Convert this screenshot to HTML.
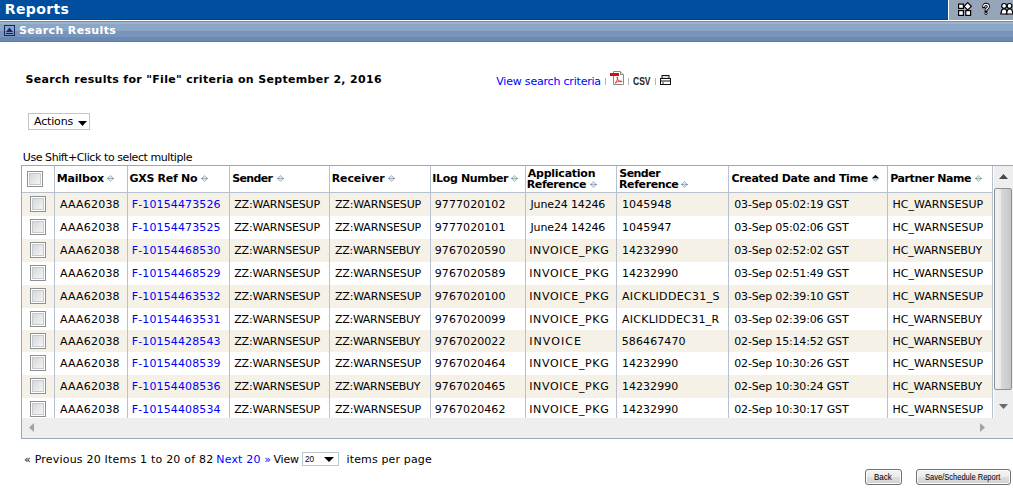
<!DOCTYPE html><html><head><meta charset="utf-8"><title>Reports</title><style>
html,body{margin:0;padding:0;background:#fff;}
body{width:1013px;height:499px;position:relative;overflow:hidden;font-family:"DejaVu Sans","Liberation Sans",sans-serif;font-size:11px;color:#000;}
.a{position:absolute;white-space:nowrap;}
.vb{width:1px;background:#b7c1d0;top:166px;height:252px}
.cb{width:16px;height:16px;border:1px solid #8e8f8f;background:#fff;box-sizing:border-box;}
.cb i{position:absolute;left:1px;top:1px;width:12px;height:12px;background:linear-gradient(135deg,#d6d8da,#f4f4f4);border:1px solid #c6cace;box-sizing:border-box;}
</style></head><body>
<div class="a" style="left:0;top:0;width:1013px;height:19px;background:#004f9f;border-bottom:1px solid #003f90"></div>
<div class="a" style="left:948px;top:0;width:65px;height:20px;background:#97a5b9;border-left:1px solid #fff"></div>
<div class="a" style="left:0;top:21px;width:1013px;height:21px;background:linear-gradient(#818b9b 0px,#818b9b 1px,#9db3d0 1px,#9db3d0 3px,#8ba6c6 3px,#8ba6c6 10px,#7795bb 10px,#7795bb 16px,#6a8ab3 16px,#6a8ab3 20px,#5f7a9c 20px,#5f7a9c 21px)"></div>
<svg class="a" style="left:4px;top:25px" width="11" height="11" viewBox="0 0 11 11"><rect x="0.5" y="0.5" width="10" height="10" fill="none" stroke="#14286a"/><path d="M2 7 L5.5 2.5 L9 7 Z" fill="#14286a"/><rect x="2" y="8" width="7" height="1" fill="#14286a"/></svg>
<svg class="a" style="left:957px;top:2px" width="56" height="16" viewBox="0 0 56 16"><g fill="#fff" stroke="#000" stroke-width="1.2"><rect x="1.6" y="2.1" width="4.8" height="4.3"/><rect x="1.6" y="8.6" width="4.8" height="4.8"/><rect x="8.8" y="8.6" width="4.8" height="4.8"/><path d="M10.7 0.7 L14.3 4.3 L10.7 7.9 L7.1 4.3 Z"/></g><path d="M26.7 4.9 q0-2.6 2.3-2.6 q2.4 0 2.4 2.2 q0 1.4-1.4 2.3 q-1 0.7-1 1.8" fill="none" stroke="#000" stroke-width="2.9" stroke-linecap="square"/><path d="M26.7 4.9 q0-2.6 2.3-2.6 q2.4 0 2.4 2.2 q0 1.4-1.4 2.3 q-1 0.7-1 1.8" fill="none" stroke="#fff" stroke-width="1.3"/><circle cx="29" cy="11.5" r="1.45" fill="#000"/><circle cx="29" cy="11.5" r="0.65" fill="#fff"/><g fill="#fff" stroke="#000" stroke-width="1.2"><path d="M43.8 12 L44.8 8 q2.3-2 4.6 0 L50.4 12 Z"/><circle cx="47.1" cy="3.9" r="2.4"/><path d="M49.4 12 L50.4 8 q2.3-2 4.6 0 L56 12 Z"/><circle cx="52.5" cy="3.9" r="2.4"/></g></svg>
<div class="a" style="left:605px;top:78px;width:1px;height:7px;background:#b4b4b4"></div>
<div class="a" style="left:628px;top:78px;width:1px;height:7px;background:#b4b4b4"></div>
<div class="a" style="left:655px;top:78px;width:1px;height:7px;background:#b4b4b4"></div>
<svg class="a" style="left:610px;top:71px" width="14" height="14" viewBox="0 0 14 14"><path d="M3.5 0.5 H10.5 L13.5 3.5 V13.5 H3.5 Z" fill="#fff" stroke="#8a8a8a" stroke-width="1"/><path d="M10.5 0.5 V3.5 H13.5" fill="#e4e4e4" stroke="#8a8a8a" stroke-width="1"/><rect x="0" y="2" width="9" height="3" fill="#d4100c"/><path d="M5.2 12.2 C7 10 8 7.6 7.6 6.2 C7.2 5.4 6.8 6.6 7.6 8.2 C8.6 10 10.4 11 11.8 10.8 C12.6 10.4 11 9.8 8.8 10.2 C7.2 10.6 5.8 11.6 5.2 12.2 Z" fill="none" stroke="#e0201c" stroke-width="0.9"/></svg>
<svg class="a" style="left:660px;top:75px" width="11" height="10" viewBox="0 0 11 10"><rect x="2" y="0.5" width="7" height="3" fill="#ddd" stroke="#111"/><rect x="0.5" y="3.5" width="10" height="6" fill="#fff" stroke="#111"/><rect x="0.5" y="5.5" width="10" height="1" fill="#111"/><rect x="2" y="7.5" width="2" height="1" fill="#333"/></svg>
<div class="a" style="left:28px;top:113px;width:62px;height:17px;border:1px solid #c4c4c4;box-sizing:border-box;background:#fff"></div>
<svg class="a" style="left:78px;top:121px" width="9" height="5" viewBox="0 0 9 5"><path d="M0 0 H9 L4.5 5 Z" fill="#000"/></svg>
<div class="a" style="left:21px;top:165px;width:992px;height:274px;border:1px solid #9aa8bb;border-right:none;box-sizing:border-box;background:#fff"></div>
<div class="a" style="left:22px;top:193px;width:970px;height:23px;background:#f5f1e6"></div>
<div class="a" style="left:22px;top:239px;width:970px;height:23px;background:#f5f1e6"></div>
<div class="a" style="left:22px;top:285px;width:970px;height:23px;background:#f5f1e6"></div>
<div class="a" style="left:22px;top:330px;width:970px;height:22px;background:#f5f1e6"></div>
<div class="a" style="left:22px;top:375px;width:970px;height:23px;background:#f5f1e6"></div>
<div class="a" style="left:22px;top:192px;width:971px;height:1px;background:#b7c1d0"></div>
<div class="a vb" style="left:54px"></div>
<div class="a vb" style="left:127px"></div>
<div class="a vb" style="left:229px"></div>
<div class="a vb" style="left:329px"></div>
<div class="a vb" style="left:430px"></div>
<div class="a vb" style="left:525px"></div>
<div class="a vb" style="left:616px"></div>
<div class="a vb" style="left:728px"></div>
<div class="a vb" style="left:887px"></div>
<div class="a vb" style="left:992px"></div>
<div class="a cb" style="left:27px;top:171px"><i></i></div>
<div class="a cb" style="left:30px;top:196px"><i></i></div>
<div class="a cb" style="left:30px;top:219px"><i></i></div>
<div class="a cb" style="left:30px;top:242px"><i></i></div>
<div class="a cb" style="left:30px;top:265px"><i></i></div>
<div class="a cb" style="left:30px;top:288px"><i></i></div>
<div class="a cb" style="left:30px;top:311px"><i></i></div>
<div class="a cb" style="left:30px;top:333px"><i></i></div>
<div class="a cb" style="left:30px;top:355px"><i></i></div>
<div class="a cb" style="left:30px;top:378px"><i></i></div>
<div class="a cb" style="left:30px;top:401px"><i></i></div>
<svg class="a" style="left:106.5px;top:175px" width="7" height="7" viewBox="0 0 7 7"><path d="M3.5 0.4 L6.6 3.5 L3.5 6.6 L0.4 3.5 Z" fill="#d0e6e2" stroke="#a2adbd" stroke-width="0.8"/><rect x="0" y="3" width="2.6" height="1" fill="#8a96a8"/><rect x="4.4" y="3" width="2.6" height="1" fill="#8a96a8"/><rect x="2.6" y="3" width="1.8" height="1" fill="#b4bcc6"/></svg>
<svg class="a" style="left:200.5px;top:175px" width="7" height="7" viewBox="0 0 7 7"><path d="M3.5 0.4 L6.6 3.5 L3.5 6.6 L0.4 3.5 Z" fill="#d0e6e2" stroke="#a2adbd" stroke-width="0.8"/><rect x="0" y="3" width="2.6" height="1" fill="#8a96a8"/><rect x="4.4" y="3" width="2.6" height="1" fill="#8a96a8"/><rect x="2.6" y="3" width="1.8" height="1" fill="#b4bcc6"/></svg>
<svg class="a" style="left:276.5px;top:175px" width="7" height="7" viewBox="0 0 7 7"><path d="M3.5 0.4 L6.6 3.5 L3.5 6.6 L0.4 3.5 Z" fill="#d0e6e2" stroke="#a2adbd" stroke-width="0.8"/><rect x="0" y="3" width="2.6" height="1" fill="#8a96a8"/><rect x="4.4" y="3" width="2.6" height="1" fill="#8a96a8"/><rect x="2.6" y="3" width="1.8" height="1" fill="#b4bcc6"/></svg>
<svg class="a" style="left:387.5px;top:175px" width="7" height="7" viewBox="0 0 7 7"><path d="M3.5 0.4 L6.6 3.5 L3.5 6.6 L0.4 3.5 Z" fill="#d0e6e2" stroke="#a2adbd" stroke-width="0.8"/><rect x="0" y="3" width="2.6" height="1" fill="#8a96a8"/><rect x="4.4" y="3" width="2.6" height="1" fill="#8a96a8"/><rect x="2.6" y="3" width="1.8" height="1" fill="#b4bcc6"/></svg>
<svg class="a" style="left:511.3px;top:175px" width="7" height="7" viewBox="0 0 7 7"><path d="M3.5 0.4 L6.6 3.5 L3.5 6.6 L0.4 3.5 Z" fill="#d0e6e2" stroke="#a2adbd" stroke-width="0.8"/><rect x="0" y="3" width="2.6" height="1" fill="#8a96a8"/><rect x="4.4" y="3" width="2.6" height="1" fill="#8a96a8"/><rect x="2.6" y="3" width="1.8" height="1" fill="#b4bcc6"/></svg>
<svg class="a" style="left:589.5px;top:181px" width="7" height="7" viewBox="0 0 7 7"><path d="M3.5 0.4 L6.6 3.5 L3.5 6.6 L0.4 3.5 Z" fill="#d0e6e2" stroke="#a2adbd" stroke-width="0.8"/><rect x="0" y="3" width="2.6" height="1" fill="#8a96a8"/><rect x="4.4" y="3" width="2.6" height="1" fill="#8a96a8"/><rect x="2.6" y="3" width="1.8" height="1" fill="#b4bcc6"/></svg>
<svg class="a" style="left:681.4px;top:181px" width="7" height="7" viewBox="0 0 7 7"><path d="M3.5 0.4 L6.6 3.5 L3.5 6.6 L0.4 3.5 Z" fill="#d0e6e2" stroke="#a2adbd" stroke-width="0.8"/><rect x="0" y="3" width="2.6" height="1" fill="#8a96a8"/><rect x="4.4" y="3" width="2.6" height="1" fill="#8a96a8"/><rect x="2.6" y="3" width="1.8" height="1" fill="#b4bcc6"/></svg>
<svg class="a" style="left:871.5px;top:175px" width="7" height="7" viewBox="0 0 7 7"><path d="M3.5 -0.2 L6.9 3 H0.1 Z" fill="#0a0a0a"/><rect x="0" y="3" width="2.6" height="1" fill="#8a96a8"/><rect x="4.4" y="3" width="2.6" height="1" fill="#8a96a8"/><rect x="2.6" y="3" width="1.8" height="1" fill="#b4bcc6"/><path d="M0.6 4 H6.4 L3.5 6.8 Z" fill="#c6dcda" stroke="#aab6c2" stroke-width="0.5"/></svg>
<svg class="a" style="left:974.7px;top:175px" width="7" height="7" viewBox="0 0 7 7"><path d="M3.5 0.4 L6.6 3.5 L3.5 6.6 L0.4 3.5 Z" fill="#d0e6e2" stroke="#a2adbd" stroke-width="0.8"/><rect x="0" y="3" width="2.6" height="1" fill="#8a96a8"/><rect x="4.4" y="3" width="2.6" height="1" fill="#8a96a8"/><rect x="2.6" y="3" width="1.8" height="1" fill="#b4bcc6"/></svg>
<div class="a" style="left:22px;top:418px;width:991px;height:20px;background:#eeeeee"></div>
<svg class="a" style="left:29px;top:423px" width="5" height="9" viewBox="0 0 5 9"><path d="M5 0 V9 L0 4.5 Z" fill="#a3a3a3"/></svg>
<svg class="a" style="left:980px;top:423px" width="5" height="9" viewBox="0 0 5 9"><path d="M0 0 V9 L5 4.5 Z" fill="#a3a3a3"/></svg>
<div class="a" style="left:993px;top:166px;width:20px;height:252px;background:#eeeeee;border-left:1px solid #fff;box-sizing:border-box"></div>
<svg class="a" style="left:999px;top:174px" width="9" height="5" viewBox="0 0 9 5"><path d="M0 5 H9 L4.5 0 Z" fill="#484848"/></svg>
<svg class="a" style="left:999px;top:404px" width="9" height="5" viewBox="0 0 9 5"><path d="M0 0 H9 L4.5 5 Z" fill="#6a6a6a"/></svg>
<div class="a" style="left:994px;top:188px;width:18px;height:202px;background:linear-gradient(90deg,#f0f0f0 0%,#ececec 34%,#d8d8d8 38%,#d0d0d0 70%,#c6c6c6 100%);border:1px solid #8e8e8e;border-radius:2px;box-sizing:border-box"></div>
<div class="a" style="left:302px;top:452px;width:37px;height:14px;border:1px solid #b9c9c3;box-sizing:border-box;background:#fff"></div>
<svg class="a" style="left:324px;top:457px" width="10" height="5" viewBox="0 0 10 5"><path d="M0 0 H10 L5 5 Z" fill="#000"/></svg>
<div class="a" style="left:865px;top:469px;width:37px;height:16px;border:1px solid #707070;border-radius:3px;background:linear-gradient(#f4f4f4 0%,#ebebeb 48%,#dcdcdc 52%,#d2d2d2 100%);box-sizing:border-box;box-shadow:inset 0 0 0 1px #fafafa;"></div>
<div class="a" style="left:916px;top:469px;width:95px;height:16px;border:1px solid #707070;border-radius:3px;background:linear-gradient(#f4f4f4 0%,#ebebeb 48%,#dcdcdc 52%,#d2d2d2 100%);box-sizing:border-box;box-shadow:inset 0 0 0 1px #fafafa;"></div>
<div class="a" id="title" style="left:4.75px;top:0px;font-size:14px;font-weight:bold;color:#fff;line-height:18px;letter-spacing:0.383px">Reports</div>
<div class="a" id="subt" style="left:19.00px;top:24px;font-weight:bold;color:#fff;line-height:14px;letter-spacing:0.346px">Search Results</div>
<div class="a" id="res" style="left:25.50px;top:73px;font-weight:bold;line-height:14px;letter-spacing:0.318px">Search results for "File" criteria on September 2, 2016</div>
<div class="a" id="vsc" style="left:496.25px;top:75px;color:#0000ff;line-height:14px;letter-spacing:-0.200px">View search criteria</div>
<div class="a" id="csv" style="left:632.75px;top:75px;font-family:'Liberation Sans',sans-serif;font-size:10px;font-weight:bold;line-height:14px;color:#222;transform:scaleX(0.8500);transform-origin:0 0">CSV</div>
<div class="a" id="act" style="left:34.00px;top:115px;line-height:14px;letter-spacing:-0.158px">Actions</div>
<div class="a" id="use" style="left:22.75px;top:151px;line-height:14px;letter-spacing:-0.421px">Use Shift+Click to select multiple</div>
<div class="a" id="h0" style="left:56.75px;top:172px;font-weight:bold;line-height:14px;letter-spacing:-0.175px">Mailbox</div>
<div class="a" id="h1" style="left:129.50px;top:172px;font-weight:bold;line-height:14px;letter-spacing:-0.289px">GXS Ref No</div>
<div class="a" id="h2" style="left:232.25px;top:172px;font-weight:bold;line-height:14px;letter-spacing:-0.650px">Sender</div>
<div class="a" id="h3" style="left:331.75px;top:172px;font-weight:bold;line-height:14px;letter-spacing:-0.121px">Receiver</div>
<div class="a" id="h4" style="left:432.25px;top:172px;font-weight:bold;line-height:14px;letter-spacing:-0.335px">ILog Number</div>
<div class="a" id="h5" style="left:527.75px;top:167px;font-weight:bold;line-height:14px;letter-spacing:-0.240px">Application</div>
<div class="a" id="h6" style="left:526.75px;top:178px;font-weight:bold;line-height:14px;letter-spacing:-0.400px">Reference</div>
<div class="a" id="h7" style="left:619.25px;top:167px;font-weight:bold;line-height:14px;letter-spacing:-0.530px">Sender</div>
<div class="a" id="h8" style="left:619.00px;top:178px;font-weight:bold;line-height:14px;letter-spacing:-0.387px">Reference</div>
<div class="a" id="h9" style="left:731.50px;top:172px;font-weight:bold;line-height:14px;letter-spacing:-0.320px">Created Date and Time</div>
<div class="a" id="h10" style="left:890.25px;top:172px;font-weight:bold;line-height:14px;letter-spacing:-0.423px">Partner Name</div>
<div class="a" id="d0_0" style="left:60.00px;top:198px;line-height:14px;letter-spacing:0.200px">AAA62038</div>
<div class="a" id="d0_1" style="left:131.75px;top:198px;line-height:14px;color:#0000ff;letter-spacing:0.125px">F-10154473526</div>
<div class="a" id="d0_2" style="left:234.25px;top:198px;line-height:14px;letter-spacing:-0.205px">ZZ:WARNSESUP</div>
<div class="a" id="d0_3" style="left:335.00px;top:198px;line-height:14px;letter-spacing:-0.173px">ZZ:WARNSESUP</div>
<div class="a" id="d0_4" style="left:434.75px;top:198px;line-height:14px;letter-spacing:0.078px">9777020102</div>
<div class="a" id="d0_5" style="left:530.50px;top:198px;line-height:14px;letter-spacing:-0.145px">June24 14246</div>
<div class="a" id="d0_6" style="left:622.00px;top:198px;line-height:14px;letter-spacing:0.083px">1045948</div>
<div class="a" id="d0_7" style="left:734.25px;top:198px;line-height:14px;letter-spacing:-0.164px">03-Sep 05:02:19 GST</div>
<div class="a" id="d0_8" style="left:892.50px;top:198px;line-height:14px;letter-spacing:-0.009px">HC_WARNSESUP</div>
<div class="a" id="d1_0" style="left:60.00px;top:221px;line-height:14px;letter-spacing:0.200px">AAA62038</div>
<div class="a" id="d1_1" style="left:131.75px;top:221px;line-height:14px;color:#0000ff;letter-spacing:0.125px">F-10154473525</div>
<div class="a" id="d1_2" style="left:234.25px;top:221px;line-height:14px;letter-spacing:-0.205px">ZZ:WARNSESUP</div>
<div class="a" id="d1_3" style="left:335.00px;top:221px;line-height:14px;letter-spacing:-0.173px">ZZ:WARNSESUP</div>
<div class="a" id="d1_4" style="left:434.75px;top:221px;line-height:14px;letter-spacing:0.078px">9777020101</div>
<div class="a" id="d1_5" style="left:530.50px;top:221px;line-height:14px;letter-spacing:-0.145px">June24 14246</div>
<div class="a" id="d1_6" style="left:622.00px;top:221px;line-height:14px;letter-spacing:0.083px">1045947</div>
<div class="a" id="d1_7" style="left:734.25px;top:221px;line-height:14px;letter-spacing:-0.164px">03-Sep 05:02:06 GST</div>
<div class="a" id="d1_8" style="left:892.50px;top:221px;line-height:14px;letter-spacing:-0.009px">HC_WARNSESUP</div>
<div class="a" id="d2_0" style="left:60.00px;top:244px;line-height:14px;letter-spacing:0.200px">AAA62038</div>
<div class="a" id="d2_1" style="left:131.75px;top:244px;line-height:14px;color:#0000ff;letter-spacing:0.125px">F-10154468530</div>
<div class="a" id="d2_2" style="left:234.25px;top:244px;line-height:14px;letter-spacing:-0.205px">ZZ:WARNSESUP</div>
<div class="a" id="d2_3" style="left:335.00px;top:244px;line-height:14px;letter-spacing:-0.295px">ZZ:WARNSEBUY</div>
<div class="a" id="d2_4" style="left:434.75px;top:244px;line-height:14px;letter-spacing:0.078px">9767020590</div>
<div class="a" id="d2_5" style="left:529.25px;top:244px;line-height:14px;letter-spacing:0.620px">INVOICE_PKG</div>
<div class="a" id="d2_6" style="left:622.00px;top:244px;line-height:14px;letter-spacing:0.029px">14232990</div>
<div class="a" id="d2_7" style="left:734.25px;top:244px;line-height:14px;letter-spacing:-0.164px">03-Sep 02:52:02 GST</div>
<div class="a" id="d2_8" style="left:892.50px;top:244px;line-height:14px;letter-spacing:-0.141px">HC_WARNSEBUY</div>
<div class="a" id="d3_0" style="left:60.00px;top:267px;line-height:14px;letter-spacing:0.200px">AAA62038</div>
<div class="a" id="d3_1" style="left:131.75px;top:267px;line-height:14px;color:#0000ff;letter-spacing:0.125px">F-10154468529</div>
<div class="a" id="d3_2" style="left:234.25px;top:267px;line-height:14px;letter-spacing:-0.205px">ZZ:WARNSESUP</div>
<div class="a" id="d3_3" style="left:335.00px;top:267px;line-height:14px;letter-spacing:-0.173px">ZZ:WARNSESUP</div>
<div class="a" id="d3_4" style="left:434.75px;top:267px;line-height:14px;letter-spacing:0.078px">9767020589</div>
<div class="a" id="d3_5" style="left:529.25px;top:267px;line-height:14px;letter-spacing:0.620px">INVOICE_PKG</div>
<div class="a" id="d3_6" style="left:622.00px;top:267px;line-height:14px;letter-spacing:0.029px">14232990</div>
<div class="a" id="d3_7" style="left:734.25px;top:267px;line-height:14px;letter-spacing:-0.164px">03-Sep 02:51:49 GST</div>
<div class="a" id="d3_8" style="left:892.50px;top:267px;line-height:14px;letter-spacing:-0.009px">HC_WARNSESUP</div>
<div class="a" id="d4_0" style="left:60.00px;top:290px;line-height:14px;letter-spacing:0.200px">AAA62038</div>
<div class="a" id="d4_1" style="left:131.75px;top:290px;line-height:14px;color:#0000ff;letter-spacing:0.125px">F-10154463532</div>
<div class="a" id="d4_2" style="left:234.25px;top:290px;line-height:14px;letter-spacing:-0.205px">ZZ:WARNSESUP</div>
<div class="a" id="d4_3" style="left:335.00px;top:290px;line-height:14px;letter-spacing:-0.173px">ZZ:WARNSESUP</div>
<div class="a" id="d4_4" style="left:434.75px;top:290px;line-height:14px;letter-spacing:0.078px">9767020100</div>
<div class="a" id="d4_5" style="left:529.25px;top:290px;line-height:14px;letter-spacing:0.620px">INVOICE_PKG</div>
<div class="a" id="d4_6" style="left:622.00px;top:290px;line-height:14px;letter-spacing:0.342px">AICKLIDDEC31_S</div>
<div class="a" id="d4_7" style="left:734.25px;top:290px;line-height:14px;letter-spacing:-0.164px">03-Sep 02:39:10 GST</div>
<div class="a" id="d4_8" style="left:892.50px;top:290px;line-height:14px;letter-spacing:-0.009px">HC_WARNSESUP</div>
<div class="a" id="d5_0" style="left:60.00px;top:313px;line-height:14px;letter-spacing:0.200px">AAA62038</div>
<div class="a" id="d5_1" style="left:131.75px;top:313px;line-height:14px;color:#0000ff;letter-spacing:0.125px">F-10154463531</div>
<div class="a" id="d5_2" style="left:234.25px;top:313px;line-height:14px;letter-spacing:-0.205px">ZZ:WARNSESUP</div>
<div class="a" id="d5_3" style="left:335.00px;top:313px;line-height:14px;letter-spacing:-0.295px">ZZ:WARNSEBUY</div>
<div class="a" id="d5_4" style="left:434.75px;top:313px;line-height:14px;letter-spacing:0.078px">9767020099</div>
<div class="a" id="d5_5" style="left:529.25px;top:313px;line-height:14px;letter-spacing:0.620px">INVOICE_PKG</div>
<div class="a" id="d5_6" style="left:622.00px;top:313px;line-height:14px;letter-spacing:0.262px">AICKLIDDEC31_R</div>
<div class="a" id="d5_7" style="left:734.25px;top:313px;line-height:14px;letter-spacing:-0.164px">03-Sep 02:39:06 GST</div>
<div class="a" id="d5_8" style="left:892.50px;top:313px;line-height:14px;letter-spacing:-0.141px">HC_WARNSEBUY</div>
<div class="a" id="d6_0" style="left:60.00px;top:335px;line-height:14px;letter-spacing:0.200px">AAA62038</div>
<div class="a" id="d6_1" style="left:131.75px;top:335px;line-height:14px;color:#0000ff;letter-spacing:0.125px">F-10154428543</div>
<div class="a" id="d6_2" style="left:234.25px;top:335px;line-height:14px;letter-spacing:-0.205px">ZZ:WARNSESUP</div>
<div class="a" id="d6_3" style="left:335.00px;top:335px;line-height:14px;letter-spacing:-0.295px">ZZ:WARNSEBUY</div>
<div class="a" id="d6_4" style="left:434.75px;top:335px;line-height:14px;letter-spacing:0.078px">9767020022</div>
<div class="a" id="d6_5" style="left:529.25px;top:335px;line-height:14px;letter-spacing:1.050px">INVOICE</div>
<div class="a" id="d6_6" style="left:621.75px;top:335px;line-height:14px;letter-spacing:0.100px">586467470</div>
<div class="a" id="d6_7" style="left:734.25px;top:335px;line-height:14px;letter-spacing:-0.164px">02-Sep 15:14:52 GST</div>
<div class="a" id="d6_8" style="left:892.50px;top:335px;line-height:14px;letter-spacing:-0.141px">HC_WARNSEBUY</div>
<div class="a" id="d7_0" style="left:60.00px;top:357px;line-height:14px;letter-spacing:0.200px">AAA62038</div>
<div class="a" id="d7_1" style="left:131.75px;top:357px;line-height:14px;color:#0000ff;letter-spacing:0.125px">F-10154408539</div>
<div class="a" id="d7_2" style="left:234.25px;top:357px;line-height:14px;letter-spacing:-0.205px">ZZ:WARNSESUP</div>
<div class="a" id="d7_3" style="left:335.00px;top:357px;line-height:14px;letter-spacing:-0.173px">ZZ:WARNSESUP</div>
<div class="a" id="d7_4" style="left:434.75px;top:357px;line-height:14px;letter-spacing:0.078px">9767020464</div>
<div class="a" id="d7_5" style="left:529.25px;top:357px;line-height:14px;letter-spacing:0.620px">INVOICE_PKG</div>
<div class="a" id="d7_6" style="left:622.00px;top:357px;line-height:14px;letter-spacing:0.029px">14232990</div>
<div class="a" id="d7_7" style="left:734.25px;top:357px;line-height:14px;letter-spacing:-0.164px">02-Sep 10:30:26 GST</div>
<div class="a" id="d7_8" style="left:892.50px;top:357px;line-height:14px;letter-spacing:-0.009px">HC_WARNSESUP</div>
<div class="a" id="d8_0" style="left:60.00px;top:380px;line-height:14px;letter-spacing:0.200px">AAA62038</div>
<div class="a" id="d8_1" style="left:131.75px;top:380px;line-height:14px;color:#0000ff;letter-spacing:0.125px">F-10154408536</div>
<div class="a" id="d8_2" style="left:234.25px;top:380px;line-height:14px;letter-spacing:-0.205px">ZZ:WARNSESUP</div>
<div class="a" id="d8_3" style="left:335.00px;top:380px;line-height:14px;letter-spacing:-0.295px">ZZ:WARNSEBUY</div>
<div class="a" id="d8_4" style="left:434.75px;top:380px;line-height:14px;letter-spacing:0.078px">9767020465</div>
<div class="a" id="d8_5" style="left:529.25px;top:380px;line-height:14px;letter-spacing:0.620px">INVOICE_PKG</div>
<div class="a" id="d8_6" style="left:622.00px;top:380px;line-height:14px;letter-spacing:0.029px">14232990</div>
<div class="a" id="d8_7" style="left:734.25px;top:380px;line-height:14px;letter-spacing:-0.164px">02-Sep 10:30:24 GST</div>
<div class="a" id="d8_8" style="left:892.50px;top:380px;line-height:14px;letter-spacing:-0.141px">HC_WARNSEBUY</div>
<div class="a" id="d9_0" style="left:60.00px;top:403px;line-height:14px;letter-spacing:0.200px">AAA62038</div>
<div class="a" id="d9_1" style="left:131.75px;top:403px;line-height:14px;color:#0000ff;letter-spacing:0.125px">F-10154408534</div>
<div class="a" id="d9_2" style="left:234.25px;top:403px;line-height:14px;letter-spacing:-0.205px">ZZ:WARNSESUP</div>
<div class="a" id="d9_3" style="left:335.00px;top:403px;line-height:14px;letter-spacing:-0.173px">ZZ:WARNSESUP</div>
<div class="a" id="d9_4" style="left:434.75px;top:403px;line-height:14px;letter-spacing:0.078px">9767020462</div>
<div class="a" id="d9_5" style="left:529.25px;top:403px;line-height:14px;letter-spacing:0.620px">INVOICE_PKG</div>
<div class="a" id="d9_6" style="left:622.00px;top:403px;line-height:14px;letter-spacing:0.029px">14232990</div>
<div class="a" id="d9_7" style="left:734.25px;top:403px;line-height:14px;letter-spacing:-0.164px">02-Sep 10:30:17 GST</div>
<div class="a" id="d9_8" style="left:892.50px;top:403px;line-height:14px;letter-spacing:-0.009px">HC_WARNSESUP</div>
<div class="a" id="pg1" style="left:24.00px;top:453px;line-height:14px;letter-spacing:0.205px">« Previous 20 Items 1 to 20 of 82</div>
<div class="a" id="pg2" style="left:216.25px;top:453px;color:#0000ff;line-height:14px;letter-spacing:0.169px">Next 20 »</div>
<div class="a" id="pg3" style="left:273.50px;top:453px;line-height:14px;letter-spacing:-0.217px">View</div>
<div class="a" id="pg4" style="left:346.50px;top:453px;line-height:14px;letter-spacing:0.146px">items per page</div>
<div class="a" id="sel" style="left:304.75px;top:453px;font-family:'Liberation Sans',sans-serif;font-size:9px;line-height:12px;transform:scaleX(0.9115);transform-origin:0 0">20</div>
<div class="a" id="b1" style="left:874.00px;top:470px;font-family:'Liberation Sans',sans-serif;font-size:9.5px;line-height:14px;transform:scaleX(0.8470);transform-origin:0 0">Back</div>
<div class="a" id="b2" style="left:925.00px;top:470px;font-family:'Liberation Sans',sans-serif;font-size:9.5px;line-height:14px;transform:scaleX(0.7923);transform-origin:0 0">Save/Schedule Report</div>
</body></html>
